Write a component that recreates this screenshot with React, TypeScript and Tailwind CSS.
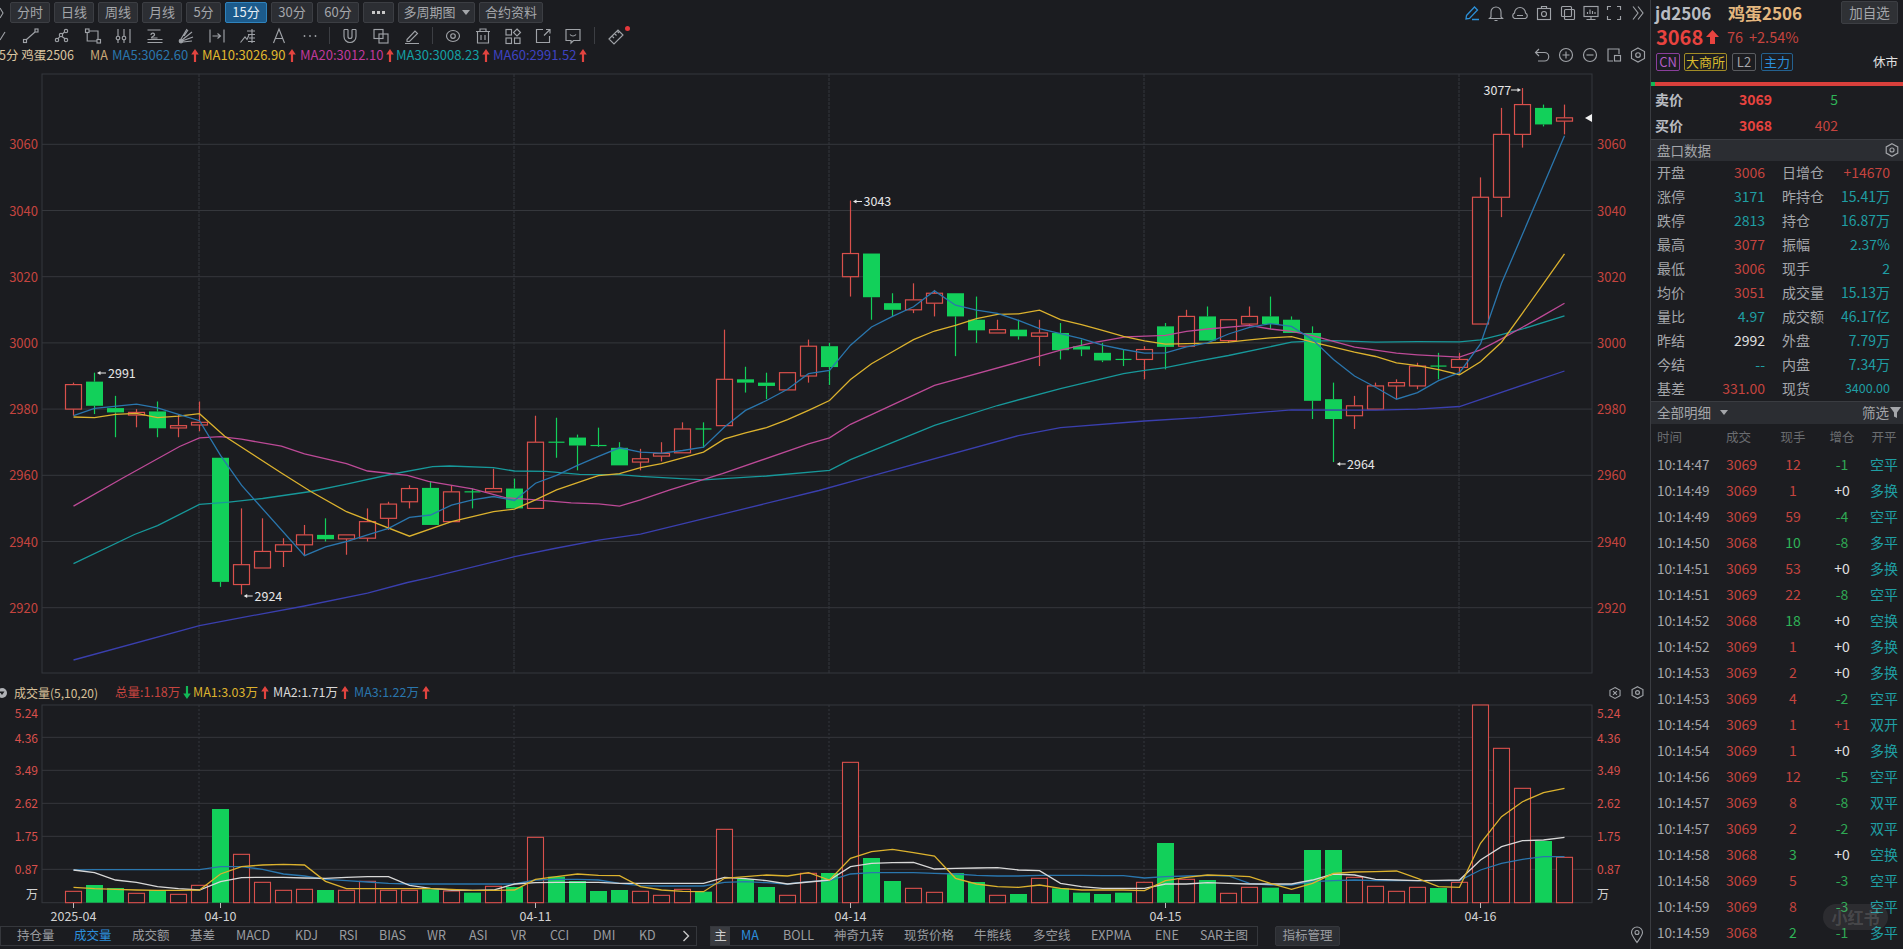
import React from "react";

type C = ["r" | "g", number, number, number, number];
const candles: C[] = [
  ["r",2987.4,2980,2988,2978],["g",2988.3,2981,2991,2978.5],["g",2980.3,2979,2984,2971.5],["r",2979,2978.2,2980,2974.5],
  ["g",2979.3,2974.2,2982.3,2971.5],["r",2975,2974.3,2978.4,2971.5],["r",2976,2975.2,2982.3,2973.3],["g",2965.3,2927.8,2965.3,2926.3],
  ["r",2933,2927,2950,2924],["r",2937,2932,2947,2932],["r",2939,2937,2941,2932.3],["r",2942,2939,2945,2935.7],
  ["g",2942,2940.7,2947,2940],["r",2942,2940.8,2942,2936],["r",2946,2941,2950,2940],["r",2951.3,2947,2952,2943.5],
  ["r",2956,2952,2957,2950],["g",2956.2,2945,2958,2945],["r",2955,2946,2957,2946],["g",2955,2955,2956,2950],
  ["r",2956,2955,2962,2955],["g",2956,2950,2959,2950],["r",2970,2950,2978,2950],["g",2970,2970,2977.4,2965.3],
  ["g",2971.4,2969,2972.3,2961.5],["g",2969,2969,2974.4,2968.6],["g",2968.3,2963,2970,2963],["r",2965,2964,2968,2961.5],
  ["r",2966.6,2965.8,2970,2964.2],["r",2974,2966.8,2976,2966.8],["g",2974,2974,2976,2968.3],["r",2989,2975,3004,2975],
  ["g",2989,2988,2992.8,2985],["g",2988,2987,2991,2983],["r",2991,2985.8,2991,2985.8],["r",2999,2990,3001,2988],
  ["g",2999,2992.7,3000,2987.3],["r",3027,3020,3043,3014],["g",3027,3013.8,3027,3007],["g",3012,3010,3015,3008],
  ["r",3013,3010,3018,3009],["r",3015,3012,3016,3008],["g",3015,3008,3015,2996],["g",3007,3003.8,3014,3000],
  ["r",3004,3003,3007,3003],["g",3004,3002,3007,3001],["r",3003,3002,3007,2993],["g",3003,2997.8,3006,2995],
  ["g",2999,2998,3001,2996],["g",2997,2994.7,3000,2994.2],["g",2995,2995,2998,2993],["r",2998,2995,2999,2989],
  ["g",3005,2998.8,3006,2992],["r",3008,2999,3010,2999],["g",3008,3000.7,3011,3000.7],["r",3007,3000.7,3007,3000],
  ["r",3008,3005.7,3011,3005],["g",3008,3005.7,3014,3004.2],["g",3007,3003,3008,3003],["g",3003,2982.5,3005,2977],
  ["g",2983,2977,2988,2964],["r",2981,2978,2984,2974],["r",2987,2980,2988,2980],["r",2988,2987,2989,2983],
  ["r",2993,2987,2994,2986],["g",2993,2993,2997,2989],["r",2995,2992.6,2997,2990.6],["r",3044,3005.7,3050,3005.7],
  ["r",3063,3044,3071,3038],["r",3072,3063,3077,3059],["g",3071,3066,3072,3065.4],["r",3068,3067,3072,3063],
];
type P = [number, number];
const ma5: P[] = [[0,2978],[1,2980.2],[3,2981.5],[4,2980.4],[5,2978.4],[6,2976.5],[7,2966],[8,2957],[11,2935.7],[12,2938.4],[13,2940],[14,2942],[15,2944],[16,2947.3],[17,2948],[18,2951],[19,2952.6],[20,2953.6],[21,2952.4],[22,2957.6],[23,2960],[24,2963],[25,2965.7],[26,2968.3],[27,2967],[28,2966.7],[29,2967.5],[30,2968.5],[31,2974.6],[32,2979.6],[33,2982.6],[34,2986],[35,2990.7],[36,2991.7],[37,2999.3],[38,3004.8],[39,3008],[40,3010.9],[41,3015.7],[42,3011.4],[43,3009.9],[44,3008.9],[45,3006.8],[46,3004.3],[47,3002.8],[48,3001.3],[49,2999.3],[50,2998],[51,2996.9],[52,2997],[53,2998.8],[54,3000],[55,3002.7],[56,3004.7],[57,3005.8],[58,3005],[59,3001],[60,2995],[61,2990],[62,2986.6],[63,2983],[64,2985],[65,2988.6],[66,2991],[67,2999.7],[68,3018],[69,3032.8],[70,3047.7],[71,3062.6]];
const ma10: P[] = [[0,2977.6],[1,2977.4],[2,2978.4],[3,2978.7],[4,2977.4],[5,2977.9],[6,2978.6],[7.2,2971.8],[9.9,2960.7],[11.3,2955.1],[13,2949],[16,2941.6],[18,2946],[20,2949],[21,2949.8],[22,2952.6],[23,2955.6],[24.6,2959.1],[25,2959.9],[26,2960.5],[27,2962.3],[28,2963.5],[29,2965.3],[30,2967],[31,2971],[32,2972.8],[33,2974.4],[34,2976.8],[35,2979.6],[36,2982.6],[37,2988.9],[38,2993.7],[39,2997.3],[40,3001],[41,3003.6],[42,3005.3],[43,3007.3],[44,3008.6],[45,3008.8],[46,3009.9],[47,3007],[48,3005.5],[49,3003.8],[50,3002],[51,3000.6],[52,2999.6],[53,2999.8],[54,2999.9],[55,3000.2],[56,3000.9],[57,3001.5],[58,3001.9],[59,3000.2],[60,2998.7],[61,2997.2],[62,2995.9],[63,2994],[64,2993.1],[65,2991.9],[66,2990.4],[67,2994.3],[68,3000.2],[69,3009],[70,3017.9],[71,3026.9]];
const ma20: P[] = [[0,2950.7],[2.33,2959.1],[5.05,2968.7],[6,2971.3],[7,2971.7],[8,2970.9],[9.9,2968.8],[11,2966.5],[13,2963.5],[14,2961.3],[15.9,2960],[16.9,2958.2],[19,2955.9],[20.6,2953.2],[22,2952.6],[23.7,2951.7],[25,2951.4],[26,2950.7],[27,2952.6],[28.4,2955.6],[30.9,2960.5],[35,2969.5],[36,2971.3],[37,2975.4],[40,2984.2],[41,2987.2],[45,2994.2],[47,2997.8],[48.5,3000],[50.1,3001.8],[52,3002.3],[53,3003.5],[54,3004.2],[56,3005.3],[57,3004.2],[58,3003.5],[59,3002.2],[61,2998.7],[63,2996.9],[64,2996.4],[66,2995.7],[67,2997.9],[68,3001.2],[69,3004.7],[70,3008.3],[71,3012]];
const ma30: P[] = [[0,2933.3],[2.9,2942.1],[4,2944.8],[6,2951.2],[7.4,2951.9],[9,2953],[11.3,2955.1],[13,2957.3],[15.2,2960.4],[17.1,2962.6],[17.9,2962.8],[20,2962.3],[21,2961.3],[22.5,2961.2],[24.1,2960.3],[26,2960.2],[27,2959.7],[30,2958.6],[33,2959.8],[36,2961.5],[37,2964.7],[41,2975.1],[44,2981.1],[47,2986.2],[50,2990.7],[51,2991.7],[52,2992.5],[53.6,2994.6],[55,2996.2],[58,3000.2],[59,3000.5],[60,3000.7],[62,3000.2],[64,3000.4],[66,3000.3],[67,3000.9],[68,3002.5],[69,3004.2],[71,3008.2]];
const ma60: P[] = [[0,2904.2],[6,2914.6],[8,2917],[11,2920.5],[14,2924.4],[15.9,2927.6],[16.9,2929],[21,2935.4],[22.9,2937.9],[25,2940.4],[27,2942.2],[35.5,2955.4],[37.2,2958.4],[45,2972],[47,2974.4],[51,2976.4],[53.6,2977.4],[58,2979.8],[62,2979.7],[64,2980],[66,2980.8],[71,2991.5]];

const X = (i: number) => 73.5 + 21 * i;
const Y = (p: number) => 144.3 + (3060 - p) * 3.31;
const VY = (z: number) => 670 + z / 3;
const pts = (a: P[]) => a.map(([i, p]) => `${X(i).toFixed(1)},${Y(p).toFixed(1)}`).join(" ");
const vpts = (a: number[]) => a.map((z, i) => `${X(i).toFixed(1)},${VY(z).toFixed(1)}`).join(" ");

const vols: ["r" | "g", number][] = [
  ["r",664],["g",645],["g",654],["r",670],["g",660],["r",673],["r",646],["g",417],["r",553],["r",637],["r",661],["r",658],["g",660],["r",661],["r",634],["r",661],["r",661],["g",658],["r",663],["g",668],["r",649],["g",651],["r",502],["g",620],["g",633],["g",663],["g",660],["r",664],["r",676],["r",658],["g",665],["r",478],["g",627],["g",651],["r",676],["r",610],["g",609],["r",277],["g",564],["g",633],["r",655],["r",667],["g",609],["g",636],["r",676],["g",672],["r",625],["g",655],["g",668],["g",672],["g",668],["r",637],["g",519],["r",628],["g",630],["r",670],["r",652],["g",653],["g",672],["g",540],["g",540],["r",622],["r",649],["r",664],["r",652],["g",654],["r",637],["r",105],["r",235],["r",355],["g",513],["r",562],
];
const v1 = [652,656,658,660,661,661,660,612,590,585,583,585,634,656,656,656,656,656,658,661,661,660,628,620,612,616,617,650,660,664,665,625,620,615,618,608,630,565,545,538,548,558,625,642,650,652,645,655,660,660,660,662,632,622,615,617,620,640,658,640,610,606,605,603,625,650,652,520,440,395,368,355];
const v2 = [600,608,630,637,650,656,660,635,623,622,622,624,625,622,620,620,646,655,660,661,660,642,638,637,637,637,640,640,640,640,640,622,626,632,642,636,630,590,580,578,577,597,595,594,593,600,602,640,650,655,655,655,642,642,638,640,642,642,642,630,612,615,628,630,632,631,630,570,530,512,510,502];
const v3 = [600,599,599,599,599,599,599,590,590,598,612,618,628,632,636,640,642,642,642,642,642,642,630,628,628,630,640,647,648,648,648,637,635,638,642,635,632,612,608,608,608,610,612,616,618,618,616,616,616,617,617,624,620,618,616,618,640,645,645,635,632,630,632,632,632,632,632,600,580,568,560,560];

const RED = "#d9504c";
const GREEN = "#12d05a";
const GRID = "#35373c";
const FONT = "'Noto Sans CJK SC','Liberation Sans',sans-serif";
const vGrid = [6, 21, 36, 51, 66];

function MainChart() {
  const prices = [3060, 3040, 3020, 3000, 2980, 2960, 2940, 2920];
  return (
    <svg className="block shrink-0" width={1650} height={616} viewBox="0 66 1650 616" style={{ fontFamily: FONT }}>
      <rect x={42} y={74} width={1550} height={599} fill="none" stroke={GRID} />
      {prices.map((p) => (
        <g key={p}>
          <line x1={42} x2={1592} y1={Y(p)} y2={Y(p)} stroke={GRID} />
          <text x={38} y={Y(p) + 5} textAnchor="end" fontSize={13} fill="#c5443f">{p}</text>
          <text x={1597} y={Y(p) + 5} fontSize={13} fill="#c5443f">{p}</text>
        </g>
      ))}
      {vGrid.map((i) => (
        <line key={i} x1={X(i) - 0.5} x2={X(i) - 0.5} y1={74} y2={673} stroke={GRID} strokeDasharray="3 1" />
      ))}
      {candles.map(([c, t, b, h, l], i) => {
        const x = X(i);
        const col = c === "r" ? RED : GREEN;
        return (
          <g key={i}>
            <line x1={x} x2={x} y1={Y(h)} y2={Y(t)} stroke={col} strokeWidth={1.2} />
            <line x1={x} x2={x} y1={Y(b)} y2={Y(l)} stroke={col} strokeWidth={1.2} />
            {c === "r" ? (
              <rect x={x - 8} y={Y(t)} width={16} height={Math.max(Y(b) - Y(t), 1)} fill="#1b1c20" stroke={col} strokeWidth={1.2} />
            ) : t === b ? (
              <line x1={x - 8} x2={x + 8} y1={Y(t)} y2={Y(t)} stroke={col} strokeWidth={1.2} />
            ) : (
              <rect x={x - 8.5} y={Y(t)} width={17} height={Y(b) - Y(t)} fill={col} />
            )}
          </g>
        );
      })}
      <polyline points={pts(ma60)} fill="none" stroke="#3a3fae" strokeWidth={1.3} />
      <polyline points={pts(ma30)} fill="none" stroke="#17989a" strokeWidth={1.3} />
      <polyline points={pts(ma20)} fill="none" stroke="#bd4a97" strokeWidth={1.3} />
      <polyline points={pts(ma10)} fill="none" stroke="#dcb22e" strokeWidth={1.3} />
      <polyline points={pts(ma5)} fill="none" stroke="#2a76ad" strokeWidth={1.3} />
      {[
        [97, 373, 108, "2991"],
        [243.7, 596, 254.5, "2924"],
        [853, 201.5, 863.5, "3043"],
        [1336.7, 464, 1347, "2964"],
      ].map(([x, y, tx, s]) => (
        <g key={s as string}>
          <line x1={(x as number) + 2} x2={(x as number) + 9} y1={y as number} y2={y as number} stroke="#e6e6e6" />
          <path d={`M${x} ${y}l3.5 -2v4z`} fill="#e6e6e6" />
          <text x={tx as number} y={(y as number) + 4.5} fontSize={12.5} fill="#e6e6e6">{s}</text>
        </g>
      ))}
      <text x={1483.5} y={94.5} fontSize={12.5} fill="#e6e6e6">3077</text>
      <line x1={1511} x2={1518} y1={90} y2={90} stroke="#e6e6e6" />
      <path d="M1521 90l-3.5 -2v4z" fill="#e6e6e6" />
      <path d="M1585 118l7 -4v8z" fill="#f2f2f2" />
    </svg>
  );
}

function VolChart() {
  const labels: [string, number][] = [["5.24",130],["4.36",205],["3.49",302],["2.62",401],["1.75",500],["0.87",599]];
  const dates: [string, number][] = [["2025-04",0],["04-10",7],["04-11",22],["04-14",37],["04-15",52],["04-16",67]];
  return (
    <svg className="block shrink-0" width={1650} height={221} viewBox="0 704 1650 221" style={{ fontFamily: FONT }}>
      <rect x={42} y={705} width={1550} height={197.7} fill="none" stroke={GRID} />
      {[202, 301, 400, 499, 598].map((z) => (
        <line key={z} x1={42} x2={1592} y1={VY(z)} y2={VY(z)} stroke={GRID} />
      ))}
      {vGrid.map((i) => (
        <line key={i} x1={X(i) - 0.5} x2={X(i) - 0.5} y1={705} y2={903} stroke={GRID} strokeDasharray="2 2" />
      ))}
      {labels.map(([s, z]) => (
        <g key={s}>
          <text x={38} y={VY(z) + 4.5} textAnchor="end" fontSize={12} fill="#d9504c">{s}</text>
          <text x={1597} y={VY(z) + 4.5} fontSize={12} fill="#d9504c">{s}</text>
        </g>
      ))}
      <text x={38} y={899} textAnchor="end" fontSize={12} fill="#d2d2d2">万</text>
      <text x={1597} y={899} fontSize={12} fill="#d2d2d2">万</text>
      {vols.map(([c, z], i) =>
        c === "r" ? (
          <rect key={i} x={X(i) - 8} y={VY(z)} width={16} height={VY(698) - VY(z)} fill="#1b1c20" stroke={RED} strokeWidth={1.1} />
        ) : (
          <rect key={i} x={X(i) - 8.5} y={VY(z)} width={17} height={VY(698) - VY(z)} fill={GREEN} />
        ),
      )}
      <polyline points={vpts(v3)} fill="none" stroke="#2a76ad" strokeWidth={1.3} />
      <polyline points={vpts(v2)} fill="none" stroke="#d8d8d8" strokeWidth={1.3} />
      <polyline points={vpts(v1)} fill="none" stroke="#dcb22e" strokeWidth={1.3} />
      {dates.map(([s, i]) => (
        <g key={s}>
          <line x1={X(i)} x2={X(i)} y1={903} y2={908} stroke="#bdbdbd" />
          <text x={X(i)} y={921} textAnchor="middle" fontSize={12.5} fill="#d2d2d2">{s}</text>
        </g>
      ))}
    </svg>
  );
}

const S = ({ children, w = 18, h = 18 }: { children: React.ReactNode; w?: number; h?: number }) => (
  <svg width={w} height={h} viewBox="0 0 18 18" fill="none" stroke="#9fa2a7" strokeWidth={1.15}>{children}</svg>
);

const drawIcons: React.ReactNode[] = [
  <S key="a"><rect x="1.5" y="12.5" width="3" height="3" /><rect x="13" y="2" width="3" height="3" /><path d="M4.5 12.5l8.5-7.5" /></S>,
  <S key="b"><circle cx="4" cy="13" r="1.7" /><circle cx="8" cy="8" r="1.7" /><circle cx="13" cy="4" r="1.7" /><circle cx="13" cy="13" r="1.7" /><path d="M5 11.7l2-2.4M9.3 7l2.3-2M9 9.5l3 2.3" /></S>,
  <S key="c"><rect x="1.5" y="2" width="3.5" height="3.5" /><rect x="13" y="12.5" width="3.5" height="3.5" /><path d="M5 4h9v8.5M3.2 5.5V14H13" /></S>,
  <S key="d"><path d="M3 2v14M9 2v14M15 2v14" /><circle cx="3" cy="11" r="1.8" fill="#1b1c20" /><circle cx="9" cy="11" r="1.8" fill="#1b1c20" /></S>,
  <S key="e"><path d="M1.5 3h13M1.5 12.5h15M1.5 15.5h15M5 8c0-3 4-2 3.5 0s-3 1-3 3h6" /></S>,
  <S key="f"><circle cx="4" cy="14" r="1.8" fill="#9fa2a7" /><path d="M5 13L15 5M5 14l11-4M4 12l6-10M6 15l9-1M7 9L11 3" /></S>,
  <S key="g"><path d="M2 2.5v13M16 2.5v13M4.5 9H12M9.5 6.5L12.5 9l-3 2.5" /></S>,
  <S key="h"><path d="M1.5 15.5L6 10l2 2.5L10 8M8 4h8M9 7.5h7M10 11h6M9 14.5h7M13 2v14" /></S>,
  <S key="i"><path d="M3.5 16L9 2l5.5 14M5 11.5h8" /></S>,
  <S key="j"><circle cx="3.5" cy="9" r="0.9" fill="#9fa2a7" stroke="none" /><circle cx="9" cy="9" r="0.9" fill="#9fa2a7" stroke="none" /><circle cx="14.5" cy="9" r="0.9" fill="#9fa2a7" stroke="none" /></S>,
];
const icons2: React.ReactNode[] = [
  <S key="a"><path d="M3 2.5v7a6 6 0 0 0 12 0v-7M7 2.5v7a2 2 0 0 0 4 0v-7M3 2.5h4M11 2.5h4" /></S>,
  <S key="b"><rect x="2" y="2.5" width="9" height="9" /><rect x="7" y="7" width="9" height="9" /></S>,
  <S key="c"><path d="M4 12.5l8-8.5 2.5 2.5-8 8H4zM2 16.5h14" /></S>,
];
const icons3: React.ReactNode[] = [
  <S key="a"><ellipse cx="9" cy="9" rx="6.5" ry="5.5" /><circle cx="9" cy="9" r="2.3" /></S>,
  <S key="b"><path d="M2 4.5h14M6 4.5V2h6v2.5M3.5 4.5V16h11V4.5M7 8v5M11 8v5" /></S>,
  <S key="c"><rect x="2" y="2.5" width="5.5" height="5.5" /><path d="M13 2l3.5 3.5L13 9 9.5 5.5z" /><rect x="2" y="11" width="5.5" height="5.5" /><rect x="10.5" y="11" width="5.5" height="5.5" /></S>,
  <S key="d"><path d="M9 2.5H2.5v13h13V9M10 8.5l6-6M12 2.5h4v4" /></S>,
  <S key="e"><path d="M2 2.5h14v11H9.5L7 16v-2.5H2zM6 7.5c1.5 2 4.5 2 6 0" /></S>,
];

function Toolbar() {
  const btns = ["分时","日线","周线","月线","5分","15分","30分","60分"];
  const widths = ["w-[40px]","w-[40px]","w-[40px]","w-[40px]","w-[35px]","w-[42px]","w-[42px]","w-[42px]"];
  const base = "h-[21px] pb-[1px] flex items-center justify-center rounded-[2px] border border-[#3c3e43] bg-[#2c2e33] text-[#a4a6aa] text-[13px] shrink-0";
  return (
    <div className="h-[25px] flex items-center gap-[4px] shrink-0">
      <svg width={6} height={18} viewBox="0 0 6 18" fill="none" stroke="#9fa2a7" strokeWidth={1.1}><path d="M0 4l3 5-3 5" /></svg>
      {btns.map((b, i) => (
        <div key={b} className={`${base} ${widths[i]} ${b === "15分" ? "!bg-[#1c5b8c] !border-[#2f83bd] !text-[#e6eef5]" : ""}`}>{b}</div>
      ))}
      <div className={`${base} w-[31px] gap-[2px]`}>
        <span className="w-[3px] h-[3px] bg-[#c8c8c8]" /><span className="w-[3px] h-[3px] bg-[#c8c8c8]" /><span className="w-[3px] h-[3px] bg-[#c8c8c8]" />
      </div>
      <div className={`${base} w-[77px] gap-[6px]`}>
        <span>多周期图</span>
        <span className="w-0 h-0 border-x-[4px] border-x-transparent border-t-[5px] border-t-[#a4a6aa]" />
      </div>
      <div className={`${base} w-[64px]`}>合约资料</div>
      <div className="flex-1" />
      <div className="flex items-center">
        <div className="w-[24px] flex justify-center">
          <svg width={18} height={18} viewBox="0 0 18 18" fill="none" stroke="#2c8fd6" strokeWidth={1.3}><path d="M3.5 11.5l8-8.5 3 3-8 8.5-3.5.5zM9 15.5h7" /></svg>
        </div>
        <div className="w-[24px] flex justify-center"><S><path d="M4 13V8a5 5 0 0 1 10 0v5l1.5 1.5h-13zM7.5 16.5h3" /></S></div>
        <div className="w-[24px] flex justify-center"><S><path d="M3.5 14.5a3 3 0 0 1 0-5.5 5.5 5.5 0 0 1 11 0 3 3 0 0 1 0 5.5zM6 11.5h6" /></S></div>
        <div className="w-[24px] flex justify-center"><S><rect x="2.5" y="4.5" width="13" height="11" /><circle cx="9" cy="10" r="2.5" /><path d="M6.5 4.5V2.5h5v2" /></S></div>
        <div className="w-[23px] flex justify-center"><S><rect x="2.5" y="2.5" width="10" height="10" rx="1" /><rect x="5.5" y="5.5" width="10" height="10" rx="1" /></S></div>
        <div className="w-[23px] flex justify-center"><S><rect x="2" y="2.5" width="14" height="10" /><path d="M9 12.5v3M4.5 15.5h9M5.5 10V8M8 10V5.5M10.5 10V7M13 10V8" /></S></div>
        <div className="w-[24px] flex justify-center"><S><path d="M2.5 6V2.5H6M12 2.5h3.5V6M15.5 12v3.5H12M6 15.5H2.5V12" /></S></div>
        <div className="w-[24px] flex justify-center"><S><path d="M4 2.5L9 9l-5 6.5M9 2.5L14 9l-5 6.5" /></S></div>
      </div>
    </div>
  );
}

function DrawRow() {
  const Sep = ({ w }: { w: string }) => (
    <div className={`${w} flex justify-center shrink-0`}><div className="w-px h-[17px] bg-[#3c3e43]" /></div>
  );
  return (
    <div className="h-[21px] flex items-center shrink-0">
      <div className="w-[15px] shrink-0">
        <svg width={8} height={18} viewBox="0 0 8 18" fill="none" stroke="#9fa2a7" strokeWidth={1.15}><path d="M0 13L5 5" /></svg>
      </div>
      {drawIcons.map((ic, i) => <div key={i} className="w-[31px] flex justify-center shrink-0">{ic}</div>)}
      <Sep w="w-[9px]" />
      {icons2.map((ic, i) => <div key={i} className="w-[31px] flex justify-center shrink-0">{ic}</div>)}
      <Sep w="w-[11px]" />
      {icons3.map((ic, i) => <div key={i} className="w-[30px] flex justify-center shrink-0">{ic}</div>)}
      <Sep w="w-[12px]" />
      <div className="relative w-[32px] flex justify-center shrink-0">
        <S><path d="M2 12L11 3l5 5-9 9zM5 9l2 2M7.5 6.5l2 2M10 4l2 2" /></S>
        <span className="absolute right-[2px] -top-[1px] w-[5px] h-[5px] rounded-full bg-[#e5383b]" />
      </div>
    </div>
  );
}

const Up = () => (
  <svg width={8} height={13} viewBox="0 0 7 12" fill="#e2443f" className="inline-block shrink-0"><path d="M3.5 0L7 5H4.5v7h-2V5H0z" /></svg>
);
const Down = () => (
  <svg width={8} height={13} viewBox="0 0 7 12" fill="#12b856" className="inline-block shrink-0"><path d="M3.5 12L7 7H4.5V0h-2v7H0z" /></svg>
);

function MaRow() {
  const items: [string, string, string][] = [
    ["MA5:3062.60","text-[#2a76ad]","w-[90px]"],
    ["MA10:3026.90","text-[#e0b92e]","w-[98px]"],
    ["MA20:3012.10","text-[#c0399c]","w-[96px]"],
    ["MA30:3008.23","text-[#14a0a5]","w-[97px]"],
    ["MA60:2991.52","text-[#3f43c0]","w-[100px]"],
  ];
  return (
    <div className="h-[20px] pb-[2px] flex items-center text-[13px] shrink-0">
      <div className="w-[91px] shrink-0 -ml-[1px] text-[12.5px] text-[#dcc6a0] whitespace-nowrap">5分 鸡蛋2506</div>
      <div className="w-[22px] shrink-0 text-[12.5px] text-[#c9a877]">MA</div>
      {items.map(([t, c, w]) => (
        <div key={t} className={`${w} shrink-0 flex items-center gap-[3px] ${c}`}><span>{t}</span><Up /></div>
      ))}
      <div className="flex-1" />
      <div className="flex items-center">
        <div className="w-[24px] flex justify-center"><S><path d="M6 3L2.5 6.5 6 10M3 6.5h8.5a3.5 3.5 0 0 1 0 8.5H5" /></S></div>
        <div className="w-[24px] flex justify-center"><S><circle cx="9" cy="9" r="6.5" /><path d="M5.5 9h7M9 5.5v7" /></S></div>
        <div className="w-[24px] flex justify-center"><S><circle cx="9" cy="9" r="6.5" /><path d="M5.5 9h7" /></S></div>
        <div className="w-[24px] flex justify-center"><S><path d="M8 15H3V3h11v5" /><rect x="9.5" y="9.5" width="6" height="5.5" /></S></div>
        <div className="w-[24px] flex justify-center"><S><path d="M9 2l6.5 3.5v7L9 16l-6.5-3.5v-7z" /><circle cx="9" cy="9" r="2.3" /></S></div>
      </div>
    </div>
  );
}

function VolLegend() {
  return (
    <div className="h-[22px] pb-[1px] flex items-center text-[12.5px] shrink-0">
      <div className="w-[17px] shrink-0 -ml-[3px]">
        <svg width={10} height={10} viewBox="0 0 10 10"><circle cx="5" cy="5" r="5" fill="#b0b2b6" /><path d="M2.5 3.5h5L5 7z" fill="#1b1c20" /></svg>
      </div>
      <div className="w-[101px] shrink-0 text-[12px] text-[#d8c09a] whitespace-nowrap">成交量(5,10,20)</div>
      <div className="shrink-0 flex items-center gap-[3px] w-[78px] text-[#c5443f]"><span>总量:1.18万</span><Down /></div>
      <div className="shrink-0 flex items-center gap-[3px] w-[80px] text-[#dcb22e]"><span>MA1:3.03万</span><Up /></div>
      <div className="shrink-0 flex items-center gap-[3px] w-[81px] text-[#d8d8d8]"><span>MA2:1.71万</span><Up /></div>
      <div className="shrink-0 flex items-center gap-[3px] text-[#2a76ad]"><span>MA3:1.22万</span><Up /></div>
      <div className="flex-1" />
      <div className="flex items-center gap-[8px] mr-[5px]">
        <svg width={14} height={14} viewBox="0 0 18 18" fill="none" stroke="#9fa2a7" strokeWidth={1.4}><path d="M9 2l6.5 3.5v7L9 16l-6.5-3.5v-7z" /><path d="M6.5 6.5l5 5M11.5 6.5l-5 5" /></svg>
        <svg width={15} height={15} viewBox="0 0 18 18" fill="none" stroke="#9fa2a7" strokeWidth={1.4}><path d="M9 2l6.5 3.5v7L9 16l-6.5-3.5v-7z" /><circle cx="9" cy="9" r="2.3" /></svg>
      </div>
    </div>
  );
}

function BottomBar() {
  const left: [string, string][] = [
    ["持仓量","w-[57px]"],["成交量","w-[58px]"],["成交额","w-[58px]"],["基差","w-[46px]"],["MACD","w-[59px]"],["KDJ","w-[44px]"],["RSI","w-[40px]"],["BIAS","w-[48px]"],["WR","w-[42px]"],["ASI","w-[42px]"],["VR","w-[39px]"],["CCI","w-[43px]"],["DMI","w-[46px]"],["KD","w-[43px]"],
  ];
  const right: [string, string][] = [
    ["MA","w-[42px]"],["BOLL","w-[51px]"],["神奇九转","w-[70px]"],["现货价格","w-[70px]"],["牛熊线","w-[59px]"],["多空线","w-[58px]"],["EXPMA","w-[64px]"],["ENE","w-[45px]"],["SAR主图","w-[54px]"],
  ];
  return (
    <div className="h-[24px] pt-[1px] flex items-start text-[12.5px] text-[#9a9ca0] shrink-0">
      <div className="w-[697px] h-[20px] pb-[1px] shrink-0 flex items-center border border-[#35373c] pl-[16px]">
        {left.map(([t, w]) => (
          <div key={t} className={`${w} shrink-0 whitespace-nowrap ${t === "成交量" ? "text-[#2b8fdc]" : ""}`}>{t}</div>
        ))}
        <svg width={8} height={12} viewBox="0 0 8 12" fill="none" stroke="#c8c8c8" strokeWidth={1.4}><path d="M1.5 1l5 5-5 5" /></svg>
      </div>
      <div className="ml-[13px] w-[548px] h-[20px] shrink-0 flex items-center border border-[#35373c]">
        <div className="w-[19px] h-full pb-[1px] shrink-0 bg-[#3a3c41] flex items-center justify-center text-[#d0d0d0]">主</div>
        <div className="w-[11px] shrink-0" />
        {right.map(([t, w]) => (
          <div key={t} className={`${w} shrink-0 pb-[1px] whitespace-nowrap ${t === "MA" ? "text-[#2b8fdc]" : ""}`}>{t}</div>
        ))}
      </div>
      <div className="ml-[17px] w-[65px] h-[20px] pb-[1px] shrink-0 rounded-[2px] bg-[#2c2e33] border border-[#35373c] flex items-center justify-center">指标管理</div>
      <div className="flex-1" />
      <div className="mr-[6px]">
        <svg width={14} height={18} viewBox="0 0 14 18" fill="none" stroke="#9fa2a7" strokeWidth={1.1}><path d="M7 16.5C3.5 11.5 1.5 9 1.5 6.5a5.5 5.5 0 0 1 11 0C12.5 9 10.5 11.5 7 16.5z" /><circle cx="7" cy="6.5" r="2" /></svg>
      </div>
    </div>
  );
}

const R = "text-[#c5443f]";
const T = "text-[#1f9ea3]";
const W = "text-[#e0e0e0]";
const stats: [string, string, string, string, string, string][] = [
  ["开盘","3006",R,"日增仓","+14670",R],
  ["涨停","3171",T,"昨持仓","15.41万",T],
  ["跌停","2813",T,"持仓","16.87万",T],
  ["最高","3077",R,"振幅","2.37%",T],
  ["最低","3006",R,"现手","2",T],
  ["均价","3051",R,"成交量","15.13万",T],
  ["量比","4.97",T,"成交额","46.17亿",T],
  ["昨结","2992",W,"外盘","7.79万",T],
  ["今结","--",T,"内盘","7.34万",T],
  ["基差","331.00",R,"现货","3400.00",T],
];
const ticks: [string, string, string, string, string][] = [
  ["10:14:47","3069","12","-1","空平"],["10:14:49","3069","1","+0","多换"],["10:14:49","3069","59","-4","空平"],
  ["10:14:50","3068","10","-8","多平"],["10:14:51","3069","53","+0","多换"],["10:14:51","3069","22","-8","空平"],
  ["10:14:52","3068","18","+0","空换"],["10:14:52","3069","1","+0","多换"],["10:14:53","3069","2","+0","多换"],
  ["10:14:53","3069","4","-2","空平"],["10:14:54","3069","1","+1","双开"],["10:14:54","3069","1","+0","多换"],
  ["10:14:56","3069","12","-5","空平"],["10:14:57","3069","8","-8","双平"],["10:14:57","3069","2","-2","双平"],
  ["10:14:58","3068","3","+0","空换"],["10:14:58","3069","5","-3","空平"],["10:14:59","3069","8","-3","空平"],
  ["10:14:59","3068","2","-1","多平"],
];

function SidePanel() {
  return (
    <div className="relative w-[253px] h-[949px] shrink-0 border-l border-[#3a3c41] bg-[#1c1d21] overflow-hidden">
      <div className="h-[25px] flex items-center pl-[4px] pr-[5px]">
        <span className="w-[73px] text-[17px] font-bold text-[#b9bcc2]">jd2506</span>
        <span className="text-[17px] font-bold text-[#e4b77f]">鸡蛋2506</span>
        <div className="flex-1" />
        <div className="w-[57px] h-[23px] rounded-[2px] border border-[#3c3e43] bg-[#2f3135] text-[13.5px] text-[#a4a6aa] flex items-center justify-center">加自选</div>
      </div>
      <div className="h-[24px] flex items-center pl-[5px] text-[#c5443f]">
        <span className="text-[20px] font-bold text-[#e8433f] w-[50px]">3068</span>
        <svg width={13} height={14} viewBox="0 0 13 14" fill="#e8433f" className="shrink-0"><path d="M6.5 0L13 7H9v7H4V7H0z" /></svg>
        <span className="ml-[8px] text-[14.5px] w-[22px]">76</span>
        <span className="text-[14.5px]">+2.54%</span>
      </div>
      <div className="h-[26px] flex items-center pl-[5px] pr-[5px] gap-[4px] text-[13px]">
        <div className="w-[24px] h-[18px] flex items-center justify-center rounded-[2px] border border-[#8a3f9c] text-[#b25cc4]">CN</div>
        <div className="w-[43px] h-[18px] flex items-center justify-center rounded-[2px] border border-[#a18c26] text-[#d9bc2e]">大商所</div>
        <div className="w-[24px] h-[18px] flex items-center justify-center rounded-[2px] border border-[#5a5c60] text-[#a4a6aa] ml-[1px]">L2</div>
        <div className="w-[32px] h-[18px] flex items-center justify-center rounded-[2px] border border-[#24618f] text-[#2b8fdc] ml-[1px]">主力</div>
        <div className="flex-1" />
        <span className="text-[#e0e0e0] text-[12.5px]">休市</span>
      </div>
      <div className="h-[4px] mt-[7px] flex">
        <div className="w-[4px] bg-[#12b856]" />
        <div className="flex-1 bg-[#d9403c]" />
      </div>
      <div className="h-[1px]" />
      {[["卖价","3069","5","text-[#2fb457]"],["买价","3068","402","text-[#c5443f]"]].map(([a, b, c, d]) => (
        <div key={a} className="h-[26px] pb-[1px] flex items-center pl-[4px]">
          <span className="w-[84px] text-[14px] font-bold text-[#b9bcc2]">{a}</span>
          <span className="w-[50px] text-[14px] font-bold text-[#e8433f]">{b}</span>
          <span className={`w-[49px] text-right text-[14px] ${d}`}>{c}</span>
        </div>
      ))}
      <div className="h-[22px] pb-[1px] bg-[#2b2d32] border-t border-[#3a3c41] flex items-center pl-[6px] pr-[3px] text-[13.5px] text-[#a4a6aa]">
        <span>盘口数据</span>
        <div className="flex-1" />
        <svg width={16} height={16} viewBox="0 0 18 18" fill="none" stroke="#a4a6aa" strokeWidth={1.3}><path d="M9 2l6.5 3.5v7L9 16l-6.5-3.5v-7z" /><circle cx="9" cy="9" r="2.3" /></svg>
      </div>
      {stats.map(([a, b, bc, c, d, dc]) => (
        <div key={a} className="h-[24px] pb-[2px] flex items-center pl-[6px] text-[14px] text-[#a4a6aa]">
          <div className="w-[108px] flex justify-between shrink-0"><span>{a}</span><span className={bc}>{b}</span></div>
          <div className="w-[108px] flex justify-between items-center shrink-0 ml-[17px]"><span>{c}</span><span className={`${dc} ${d === "3400.00" ? "text-[12.5px]" : ""}`}>{d}</span></div>
        </div>
      ))}
      <div className="h-[23px] pb-[1px] bg-[#2b2d32] border-t border-[#3a3c41] flex items-center pl-[6px] pr-[2px] text-[13.5px] text-[#a4a6aa]">
        <span>全部明细</span>
        <span className="ml-[9px] w-0 h-0 border-x-[4px] border-x-transparent border-t-[5px] border-t-[#a4a6aa]" />
        <div className="flex-1" />
        <span>筛选</span>
        <svg width={11} height={11} viewBox="0 0 11 11" fill="#a4a6aa" className="ml-[1px]"><path d="M0 0h11L7 5.5V11L4 9.5v-4z" /></svg>
      </div>
      <div className="h-[28px] pb-[1px] flex items-center pl-[6px] text-[12.5px] text-[#6a6c70]">
        <div className="w-[69px] shrink-0">时间</div>
        <div className="w-[31px] shrink-0 whitespace-nowrap">成交</div>
        <div className="w-[72px] shrink-0 text-center">现手</div>
        <div className="w-[26px] shrink-0 text-center whitespace-nowrap">增仓</div>
        <div className="w-[58px] shrink-0 text-center">开平</div>
      </div>
      {ticks.map((t, i) => {
        const up = t[1] === "3068" ? "text-[#2fb457]" : "text-[#c5443f]";
        const inc = t[3] === "+0" ? "text-[#e0e0e0]" : t[3].startsWith("+") ? "text-[#c5443f]" : "text-[#2fa854]";
        return (
          <div key={i} className="h-[26px] pb-[1px] flex items-center pl-[6px] text-[14px]">
            <div className="w-[69px] shrink-0 text-[#a4a6aa] text-[13.5px]">{t[0]}</div>
            <div className="w-[31px] shrink-0 text-[#c5443f] whitespace-nowrap">{t[1]}</div>
            <div className={`w-[72px] shrink-0 text-center ${up}`}>{t[2]}</div>
            <div className={`w-[26px] shrink-0 text-center ${inc}`}>{t[3]}</div>
            <div className="w-[58px] shrink-0 text-center text-[#1f9ea3]">{t[4]}</div>
          </div>
        );
      })}
      <div className="absolute left-[172px] top-[904px] w-[65px] h-[26px] rounded-[13px] bg-[#ffffff12] flex items-center justify-center text-[16px] font-bold text-[#ffffff26]">小红书</div>
    </div>
  );
}

export default function App() {
  return (
    <div className="flex w-[1903px] h-[949px] overflow-hidden bg-[#1b1c20] text-[#a4a6aa]" style={{ fontFamily: FONT }}>
      <div className="w-[1650px] h-[949px] shrink-0 flex flex-col">
        <Toolbar />
        <DrawRow />
        <MaRow />
        <MainChart />
        <VolLegend />
        <VolChart />
        <BottomBar />
      </div>
      <SidePanel />
    </div>
  );
}
